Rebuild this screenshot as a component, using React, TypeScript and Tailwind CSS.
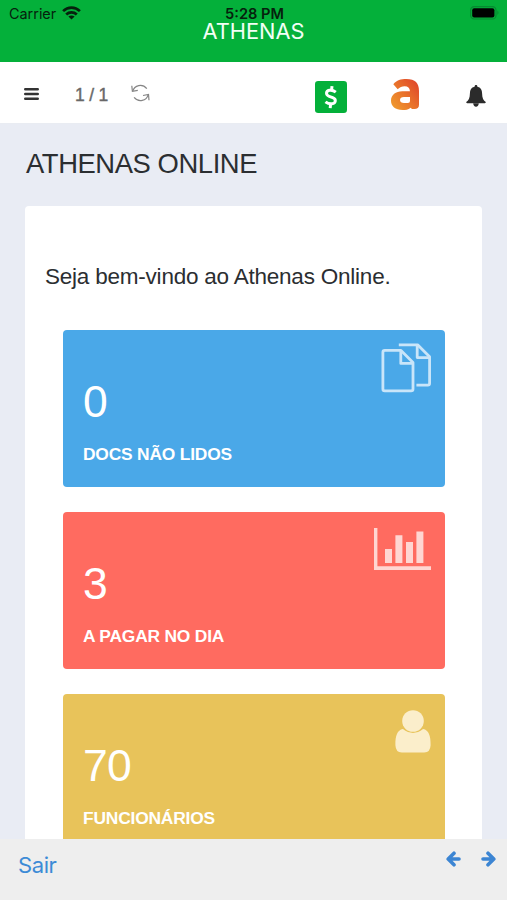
import React from 'react';
import clsx from 'clsx';

const FONT_UI = 'font-[Inter,"Liberation_Sans",sans-serif]';

interface Stat {
  value: number;
  label: string;
  color: string;
  icon: React.ReactNode;
}

const WifiIcon = () => (
  <svg className="h-[14px] w-[19px]" viewBox="0 0 19 14" fill="none" stroke="#06210d" strokeWidth="2.7">
    <path d="M1.1 5.1C5.9.5 13.1.5 17.9 5.1" />
    <path d="M4.2 8.5C7.2 5.7 11.8 5.7 14.8 8.5" />
    <path d="M9.5 13.6 6.4 10.6Q9.5 8.4 12.6 10.6Z" fill="#06210d" stroke="none" />
  </svg>
);

const BatteryIcon = () => (
  <svg className="h-[14px] w-[30px]" viewBox="0 0 30 14">
    <rect x=".6" y=".6" width="25.4" height="12.4" rx="3.6" fill="none" stroke="#078a31" strokeWidth="1.2" />
    <rect x="2.2" y="2.2" width="22.2" height="9.2" rx="2" fill="#000" />
    <path d="M27.4 4.6Q29.6 6.8 27.4 9Z" fill="#078a31" />
  </svg>
);

const MenuIcon = () => (
  <svg className="h-[14px] w-[15px]" viewBox="0 0 15 14" stroke="#333" strokeWidth="2.6" strokeLinecap="round">
    <path d="M1.3 2.2H13.7M1.3 7H13.7M1.3 11.8H13.7" />
  </svg>
);

const RefreshIcon = () => (
  <svg className="h-[18px] w-[19px]" viewBox="0 0 19 18" fill="none" stroke="#858585" strokeWidth="1.2">
    <path d="M1.8 7.2C3.4 1.2 11.2-1 15.8 4.6" />
    <path d="M.8 1.8 1.4 7.4 6.8 6.4" />
    <path d="M17.1 10.8C15.5 16.8 7.7 19 3.1 13.4" />
    <path d="M18 16.2 17.5 10.4 12 11.5" />
  </svg>
);

const DollarIcon = () => (
  <svg className="h-8 w-8" viewBox="0 0 32 32" fill="none" stroke="#fff" strokeWidth="3">
    <rect width="32" height="32" rx="3.2" fill="#04b03a" stroke="none" />
    <path d="M20.8 11.1C18.7 9.5 16.4 8.9 14.4 9.3C10.6 10.1 10.6 14.1 14.2 15.3L17.7 16.6C21.7 18.1 20.8 22.4 17 22.8C14.5 23 12.2 22.2 10.5 20.8" />
    <path d="M17 5.2 16.5 9.6M15.6 22.6 15.2 27.2" />
  </svg>
);

const AthenasLogo = () => (
  <svg className="h-[31px] w-7" viewBox="411 235 84 93">
    <defs>
      <linearGradient id="logo" x1="0" y1="1" x2="1" y2="0.1">
        <stop offset="0" stopColor="#f0a02e" />
        <stop offset="0.5" stopColor="#e9742b" />
        <stop offset="1" stopColor="#df442b" />
      </linearGradient>
    </defs>
    <path
      fill="url(#logo)"
      fillRule="evenodd"
      d="M418 251C428 238 441 235 457 235C484 235 495 248 495 270V312C495 321 490 325 481 325H474L470 321C462 327 455 328 446 328C424 327 411 317 411 300C411 283 425 272 445 272H468C467 262 462 257 452 257C444 257 437 260 431 266ZM468 289H450C442 289 438 292 438 298C438 304 443 307 450 307H462Q468 307 468 301Z"
    />
  </svg>
);

const BellIcon = () => (
  <svg className="h-[22px] w-5" viewBox="0 0 20 22" fill="#2b2b2b">
    <path d="M10 0C10.9 0 11.4.6 11.4 1.7C14.7 2.4 16.1 4.8 16.1 8.4C16.1 13 17.5 15.4 19.8 17.1Q20 18.2 18.8 18.3H1.2Q0 18.2.2 17.1C2.5 15.4 3.9 13 3.9 8.4C3.9 4.8 5.3 2.4 8.6 1.7C8.6.6 9.1 0 10 0Z" />
    <path d="M7.2 18.3H12.8C12.6 20.6 11.6 21.7 10 21.7S7.4 20.6 7.2 18.3Z" />
  </svg>
);

const DocsIcon = () => (
  <svg className="h-[50px] w-[50px]" viewBox="0 0 50 50" fill="none" stroke="#c9e5f9" strokeWidth="2.8" strokeLinejoin="round">
    <path d="M1.9 9.2Q1.9 7.4 3.7 7.4H20L32 19.4V46Q32 47.8 30.2 47.8H3.7Q1.9 47.8 1.9 46Z" />
    <path d="M19.8 7.4V20.4H32" />
    <path d="M17.8 1.8H36.6L48.6 13.8V40.3Q48.6 42.1 46.8 42.1H35.4" />
    <path d="M36.2 1.8V14.6H48.6" />
  </svg>
);

const ChartIcon = () => (
  <svg className="h-[42px] w-[57px]" viewBox="0 0 57 42" fill="#ffd6d2">
    <path d="M0 0H3.4V38.2H57V42H0Z" />
    <path d="M11 21H18V35H11ZM21.4 7.2H28.4V35H21.4ZM32 14H39V35H32ZM42.4 3.6H49.4V35H42.4Z" />
  </svg>
);

const UserIcon = () => (
  <svg className="h-[43px] w-9" viewBox="0 0 36 43" fill="#fbeecb">
    <circle cx="18" cy="11" r="10.8" />
    <path d="M7.9 19.1Q18 26.8 28.1 19.1C33.7 20.2 35.8 25.8 35.6 35.2Q35.2 42.5 29.3 42.5H6.7Q.8 42.5.4 35.2C.2 25.8 2.3 20.2 7.9 19.1Z" />
  </svg>
);

const ArrowIcon = ({ flip }: { flip?: boolean }) => (
  <svg
    className={clsx('h-4 w-[15px]', flip && '-scale-x-100')}
    viewBox="0 0 15 16"
    fill="none"
    stroke="#3c85d3"
    strokeWidth="3.6"
    strokeLinecap="round"
    strokeLinejoin="round"
  >
    <path d="M8 2.2 2.2 8 8 13.8M2.8 8H13" />
  </svg>
);

const STATS: Stat[] = [
  { value: 0, label: 'DOCS NÃO LIDOS', color: 'bg-[#4aa8e8]', icon: <div className="mt-[13px]"><DocsIcon /></div> },
  { value: 3, label: 'A PAGAR NO DIA', color: 'bg-[#ff6b60]', icon: <div className="mt-4"><ChartIcon /></div> },
  { value: 70, label: 'FUNCIONÁRIOS', color: 'bg-[#e8c35a]', icon: <div className="mt-4"><UserIcon /></div> },
];

const StatCard = ({ value, label, color, icon }: Stat) => (
  <div className={clsx('flex h-[157.5px] shrink-0 justify-between rounded-[4px] pr-[13.5px] pl-5 text-white', color)}>
    <div className="whitespace-nowrap pt-[46px]">
      <div className="text-[44.5px] leading-[52px] tracking-[-0.8px]">{value}</div>
      <div className="mt-[14px] text-[17.4px] leading-6 font-bold tracking-[-0.2px]">{label}</div>
    </div>
    {icon}
  </div>
);

export default function App() {
  return (
    <div className="flex h-[900px] w-[507px] flex-col overflow-hidden bg-[#e9ecf4] font-['Liberation_Sans',Arial,sans-serif] text-[#2b2e31]">
      {/* status bar + title */}
      <header className={clsx('h-[62px] shrink-0 bg-[#04b03a]', FONT_UI)}>
        <div className="grid h-5 grid-cols-3 items-start pt-1.5 pr-[7px] pl-[9px] leading-4 text-[#06210d]">
          <div className="flex gap-[6px]">
            <span className="text-[14.4px]">Carrier</span>
            <WifiIcon />
          </div>
          <div className="text-center text-[14.6px] font-semibold">5:28 PM</div>
          <div className="flex justify-end">
            <BatteryIcon />
          </div>
        </div>
        <div className="text-center text-[21.8px] leading-[22px] text-[#f2fff5]">ATHENAS</div>
      </header>

      {/* toolbar */}
      <nav className="flex h-[62px] shrink-0 items-center border-b border-[#e9ecf2] bg-white pr-5 pl-6">
        <div className="pt-0.5"><MenuIcon /></div>
        <span className="ml-9 w-14 pt-[5px] text-[17.5px] tracking-[-0.2px] text-[#686868] [-webkit-text-stroke:0.4px_#686868]">1 / 1</span>
        <RefreshIcon />
        <div className="ml-auto flex items-center pt-1">
          <div className="pt-1"><DollarIcon /></div>
          <div className="ml-11"><AthenasLogo /></div>
          <div className="ml-[47px] pt-0.5 pr-px"><BellIcon /></div>
        </div>
      </nav>

      <main className="flex min-h-0 flex-1 flex-col overflow-hidden px-[25px]">
        <h1 className="mt-6 ml-px text-[27.4px] leading-8 tracking-[-0.42px]">ATHENAS ONLINE</h1>
        <section className="mt-[26px] flex-1 rounded-t-[4px] bg-white pt-14 pr-[37.5px] pl-[38px]">
          <p className="-ml-[18px] text-[22.5px] leading-[30px] tracking-[-0.22px] whitespace-nowrap">Seja bem-vindo ao Athenas Online.</p>
          <div className="mt-[37.5px] flex flex-col gap-[24.5px]">
            {STATS.map((stat) => (
              <StatCard key={stat.label} {...stat} />
            ))}
          </div>
        </section>
      </main>

      <footer className={clsx('flex h-[61px] shrink-0 justify-between bg-[#eeeeee] pr-[11px] pl-[18px]', FONT_UI)}>
        <span className="pt-[11px] text-[22px] leading-[30px] tracking-[-0.4px] text-[#3c8bd6]">Sair</span>
        <div className="flex gap-5 pt-3">
          <ArrowIcon />
          <ArrowIcon flip />
        </div>
      </footer>
    </div>
  );
}
